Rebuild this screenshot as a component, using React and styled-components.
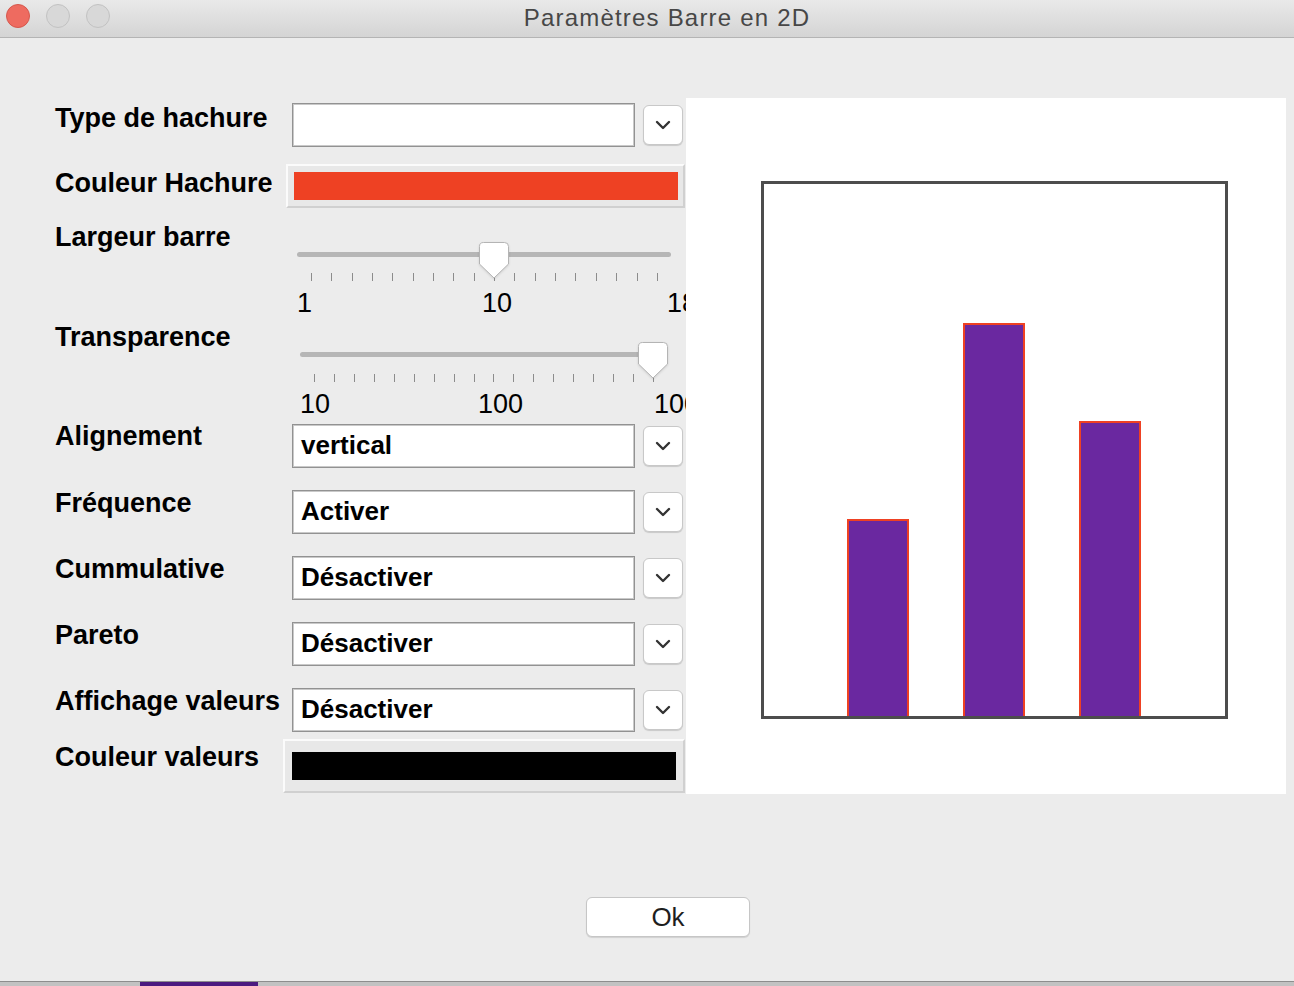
import React from 'react'
import styled, { createGlobalStyle } from 'styled-components'

const GlobalStyle = createGlobalStyle`
  html, body {
    margin:0;
    padding:0;
    background:#ececec;
  }
  body {
    font-family:"Liberation Sans", Arial, sans-serif;
  }
`

const Window = styled.div`
  width:1294px;
  height:986px;
  display:flex;
  flex-direction:column;
  background:#ececec;
  overflow:hidden;
`

const TitleBar = styled.div`
  height:37px;
  flex-shrink:0;
  display:flex;
  align-items:center;
  padding-left:6px;
  background:linear-gradient(#e9e9e9, #d4d4d4);
  border-bottom:1px solid #b4b4b4;
`

const Lights = styled.div`
  display:flex;
  gap:16px;
  margin-top:-5px;
`

const Light = styled.span`
  width:24px;
  height:24px;
  box-sizing:border-box;
  border-radius:50%;
  background:${p => p.$close ? '#ee6b60' : '#d8d8d8'};
  border:1px solid ${p => p.$close ? '#d5584d' : '#c2c2c2'};
`

const Title = styled.div`
  flex:1;
  text-align:center;
  padding-right:70px;
  font-size:24px;
  letter-spacing:1.2px;
  color:#474747;
  margin-top:-2px;
`

const Main = styled.div`
  display:flex;
  height:756px;
  flex-shrink:0;
`

const LeftPane = styled.div`
  width:686px;
  box-sizing:border-box;
  padding:65px 0 0 55px;
  overflow:hidden;
  display:flex;
  flex-direction:column;
`

const Row = styled.div`
  display:grid;
  grid-template-columns:228px 403px;
  height:${p => p.$h}px;
`

const Label = styled.div`
  font-size:27px;
  font-weight:700;
  line-height:30px;
  color:#000;
  white-space:nowrap;
  margin-top:${p => p.$dy}px;
`

const Combo = styled.div`
  display:flex;
  align-items:flex-start;
  padding-left:9px;
`

const Field = styled.div`
  width:343px;
  height:44px;
  box-sizing:border-box;
  border:1px solid #929292;
  box-shadow:inset 0 0 0 1px #c9c9c9;
  background:#fff;
  padding:0 0 2px 8px;
  font-size:26px;
  font-weight:700;
  line-height:40px;
  color:#000;
`

const ArrowButton = styled.div`
  width:40px;
  height:40px;
  box-sizing:border-box;
  margin:2px 0 0 8px;
  border:1px solid #c8c8c8;
  border-radius:6px;
  background:#fff;
  box-shadow:0 1px 1px rgba(0,0,0,0.15);
  display:flex;
  align-items:center;
  justify-content:center;
`

const ColorWell = styled.div`
  margin-left:${p => p.$ml}px;
  width:${p => p.$w}px;
  height:${p => p.$h}px;
  box-sizing:border-box;
  display:flex;
  padding:${p => p.$pad};
  background:#e8e8e8;
  border-top:2px solid #fbfbfb;
  border-left:2px solid #fbfbfb;
  border-bottom:2px solid #d0d0d0;
  border-right:2px solid #d0d0d0;
`

const Swatch = styled.div`
  flex:1;
  background:${p => p.$color};
`

const SliderBox = styled.div`
  position:relative;
  display:flex;
  flex-direction:column;
  align-items:flex-start;
`

const Track = styled.div`
  margin-left:${p => p.$left}px;
  margin-top:${p => p.$top}px;
  width:${p => p.$w}px;
  height:5px;
  border-radius:3px;
  background:#b6b6b6;
`

const Thumb = styled.svg`
  position:absolute;
  top:${p => p.$top}px;
  filter:drop-shadow(0 1px 1px rgba(0,0,0,0.12));
`

const Ticks = styled.div`
  display:flex;
  justify-content:space-between;
  margin-left:${p => p.$left}px;
  margin-top:${p => p.$top}px;
  width:${p => p.$w}px;
  height:8px;
`

const Tick = styled.span`
  width:1px;
  background:#8c8c8c;
`

const ScaleLabels = styled.div`
  position:relative;
  align-self:stretch;
  height:30px;
  margin-top:7px;
`

const ScaleLabel = styled.span`
  position:absolute;
  top:0;
  font-size:27px;
  line-height:30px;
  color:#000;
  white-space:nowrap;
`

const ChartPanel = styled.div`
  width:600px;
  height:696px;
  margin-top:60px;
  background:#fff;
`

const Footer = styled.div`
  flex:1;
  padding:103px 0 0 586px;
`

const OkButton = styled.div`
  width:164px;
  height:40px;
  box-sizing:border-box;
  border:1px solid #c6c6c6;
  border-radius:6px;
  background:#fff;
  box-shadow:0 1px 1px rgba(0,0,0,0.12);
  display:flex;
  align-items:center;
  justify-content:center;
  font-size:26px;
  color:#1e1e1e;
`

const BottomStrip = styled.div`
  height:4px;
  flex-shrink:0;
  display:flex;
  background:#c2c2c2;
  border-top:1px solid #8d8d8d;
`

const StripBlock = styled.span`
  margin-left:${p => p.$left}px;
  width:${p => p.$w}px;
  background:${p => p.$color};
`

const Chevron = () => (
  <svg width="16" height="10" viewBox="0 0 16 10">
    <path d="M2 2 L8 8 L14 2" fill="none" stroke="#333" strokeWidth="2.4" strokeLinecap="round" strokeLinejoin="round" />
  </svg>
)

const ComboBox = ({ value }) => (
  <Combo>
    <Field>{value}</Field>
    <ArrowButton><Chevron /></ArrowButton>
  </Combo>
)

const Slider = ({ s }) => {
  const thumbCenter = s.tickLeft + s.pos * (s.tickWidth - 1)
  return (
    <SliderBox>
      <Track $left={s.trackLeft} $top={s.trackTop} $w={s.trackWidth} />
      <Ticks $left={s.tickLeft} $top={s.tickTop} $w={s.tickWidth}>
        {Array.from({ length: 18 }).map((_, i) => <Tick key={i} />)}
      </Ticks>
      <ScaleLabels>
        {s.labels.map(l => <ScaleLabel key={l.text} style={{ left: l.x }}>{l.text}</ScaleLabel>)}
      </ScaleLabels>
      <Thumb $top={s.thumbTop} style={{ left: thumbCenter - 15 }} width="30" height="37" viewBox="0 0 30 37">
        <path d="M4.5 0.5 H25.5 A4 4 0 0 1 29.5 4.5 V22 L15 36 L0.5 22 V4.5 A4 4 0 0 1 4.5 0.5 Z" fill="#fff" stroke="#b4b4b4" strokeWidth="1" />
      </Thumb>
    </SliderBox>
  )
}

const widthSlider = {
  trackLeft: 14, trackTop: 28, trackWidth: 374,
  tickLeft: 28, tickTop: 16, tickWidth: 347,
  thumbTop: 18, pos: 9 / 17,
  labels: [{ text: '1', x: 14 }, { text: '10', x: 199 }, { text: '18', x: 384 }]
}

const alphaSlider = {
  trackLeft: 17, trackTop: 29, trackWidth: 368,
  tickLeft: 31, tickTop: 17, tickWidth: 340,
  thumbTop: 19, pos: 1,
  labels: [{ text: '10', x: 17 }, { text: '100', x: 195 }, { text: '1000', x: 371 }]
}

const bars = [
  { x: 162, y: 422 },
  { x: 278, y: 226 },
  { x: 394, y: 324 }
]

const combos = [
  ['Alignement', 'vertical', 66, -3],
  ['Fréquence', 'Activer', 66, -2],
  ['Cummulative', 'Désactiver', 66, -2],
  ['Pareto', 'Désactiver', 66, -2],
  ['Affichage valeurs', 'Désactiver', 51, -2]
]

export default () => (
  <Window>
    <GlobalStyle />
    <TitleBar>
      <Lights>
        <Light $close />
        <Light />
        <Light />
      </Lights>
      <Title>Paramètres Barre en 2D</Title>
    </TitleBar>
    <Main>
      <LeftPane>
        <Row $h={61}>
          <Label $dy={0}>Type de hachure</Label>
          <ComboBox value="" />
        </Row>
        <Row $h={60}>
          <Label $dy={4}>Couleur Hachure</Label>
          <ColorWell $ml={3} $w={399} $h={44} $pad="6px 5px 6px 6px">
            <Swatch $color="#ee4123" />
          </ColorWell>
        </Row>
        <Row $h={99}>
          <Label $dy={-2}>Largeur barre</Label>
          <Slider s={widthSlider} />
        </Row>
        <Row $h={101}>
          <Label $dy={-1}>Transparence</Label>
          <Slider s={alphaSlider} />
        </Row>
        {combos.map(([label, value, h, dy]) => (
          <Row key={label} $h={h}>
            <Label $dy={dy}>{label}</Label>
            <ComboBox value={value} />
          </Row>
        ))}
        <Row $h={54}>
          <Label $dy={3}>Couleur valeurs</Label>
          <ColorWell $ml={0} $w={402} $h={54} $pad="11px 7px 11px 7px">
            <Swatch $color="#000" />
          </ColorWell>
        </Row>
      </LeftPane>
      <ChartPanel>
        <svg width="600" height="696" viewBox="0 0 600 696">
          <rect x="76.5" y="84.5" width="464" height="535" fill="none" stroke="#4d4d4d" strokeWidth="3" />
          {bars.map(b => (
            <rect key={b.x} x={b.x} y={b.y} width="60" height={620 - b.y} fill="#6a28a0" stroke="#ee4123" strokeWidth="2" />
          ))}
          <line x1="75" y1="619.5" x2="542" y2="619.5" stroke="#4d4d4d" strokeWidth="3" />
        </svg>
      </ChartPanel>
    </Main>
    <Footer>
      <OkButton>Ok</OkButton>
    </Footer>
    <BottomStrip>
      <StripBlock $left={140} $w={118} $color="#4b1a80" />
    </BottomStrip>
  </Window>
)
